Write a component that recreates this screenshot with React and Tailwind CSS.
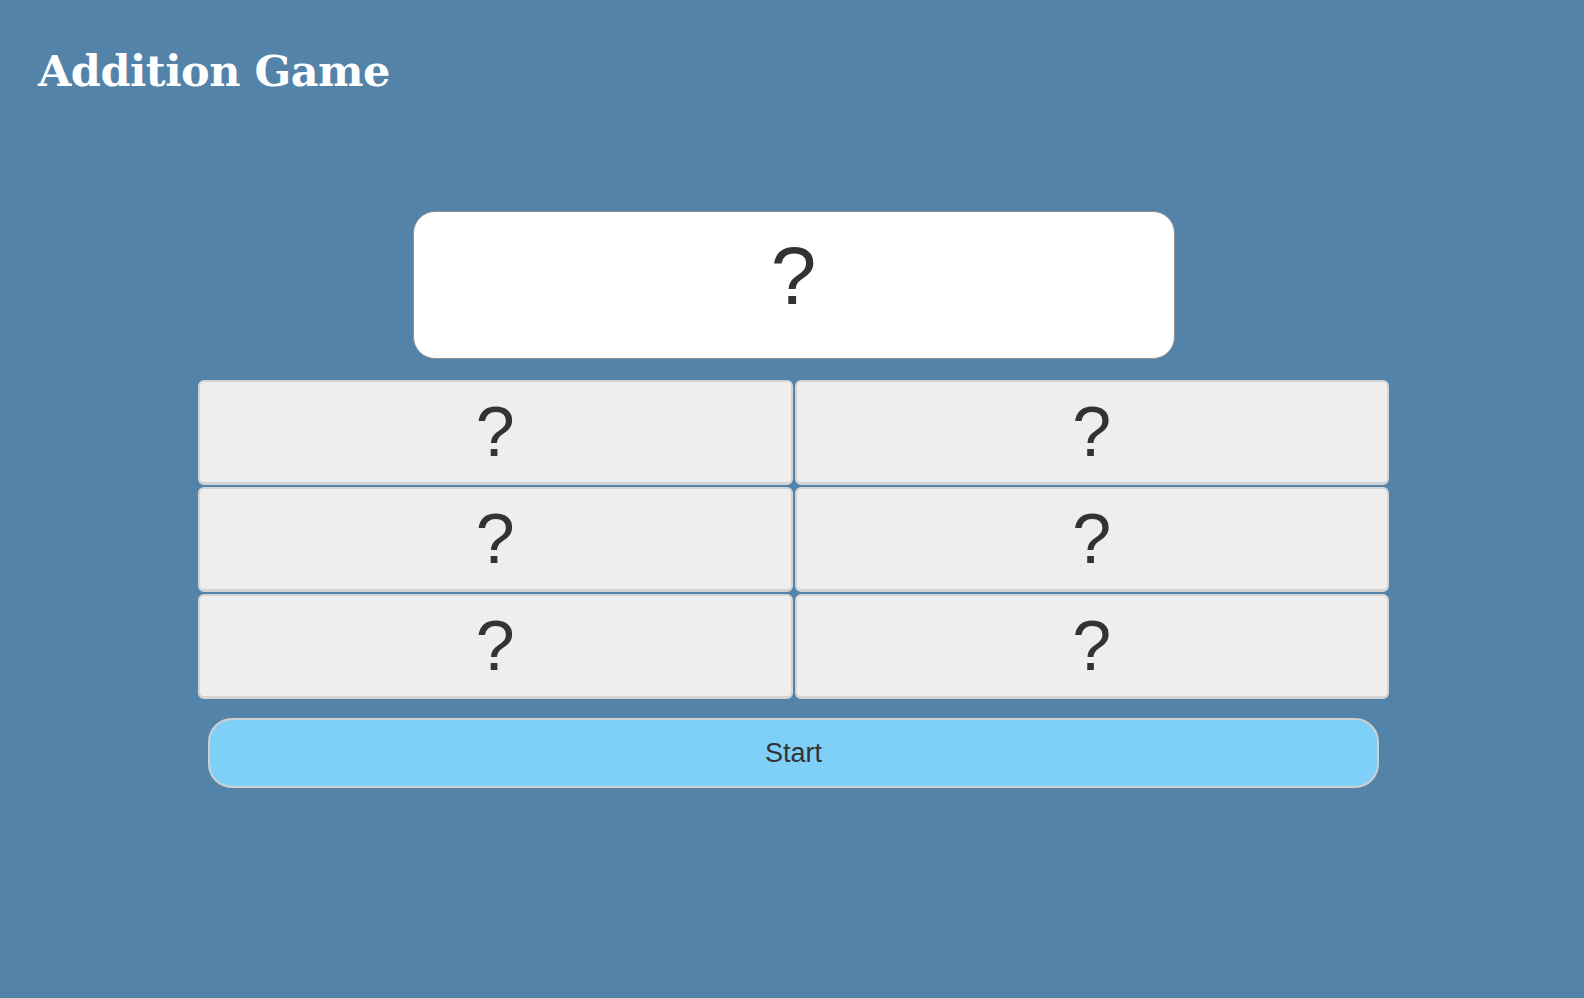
export default function App() {
  const answers = ["?", "?", "?", "?", "?", "?"];

  return (
    <div className="min-h-[998px] w-full bg-[#5483aa] font-['Liberation_Sans',Arial,sans-serif] text-[#333]">
      <div className="pl-[38px] pt-[45px]">
        <h1 className="font-['DejaVu_Serif',serif] text-[43px] font-bold leading-[52px] text-white tracking-[-0.5px]">
          Addition Game
        </h1>
      </div>

      <div className="mt-[114px] flex flex-col items-center">
        <div className="ml-[3px] flex h-[148px] w-[762px] items-center justify-center rounded-[22px] border border-[#8f8f8f] bg-white pb-[18px]">
          <span className="text-[82px] leading-none">?</span>
        </div>

        <div className="mt-[21px] ml-[3px] grid w-[1191px] grid-cols-2 gap-x-[2px] gap-y-[2px]">
          {answers.map((a, i) => (
            <button
              key={i}
              className="flex h-[105px] items-center justify-center rounded-[6px] border-2 border-b-[3px] border-[#d4d4d4] bg-[#eeeeee] text-[70px] leading-none text-[#333]"
            >
              {a}
            </button>
          ))}
        </div>

        <button className="mt-[19px] ml-[3px] h-[70px] w-[1171px] rounded-[24px] border-2 border-[#cfcfcf] bg-[#7fd0f8] text-[27px] text-[#333]">
          Start
        </button>
      </div>
    </div>
  );
}
